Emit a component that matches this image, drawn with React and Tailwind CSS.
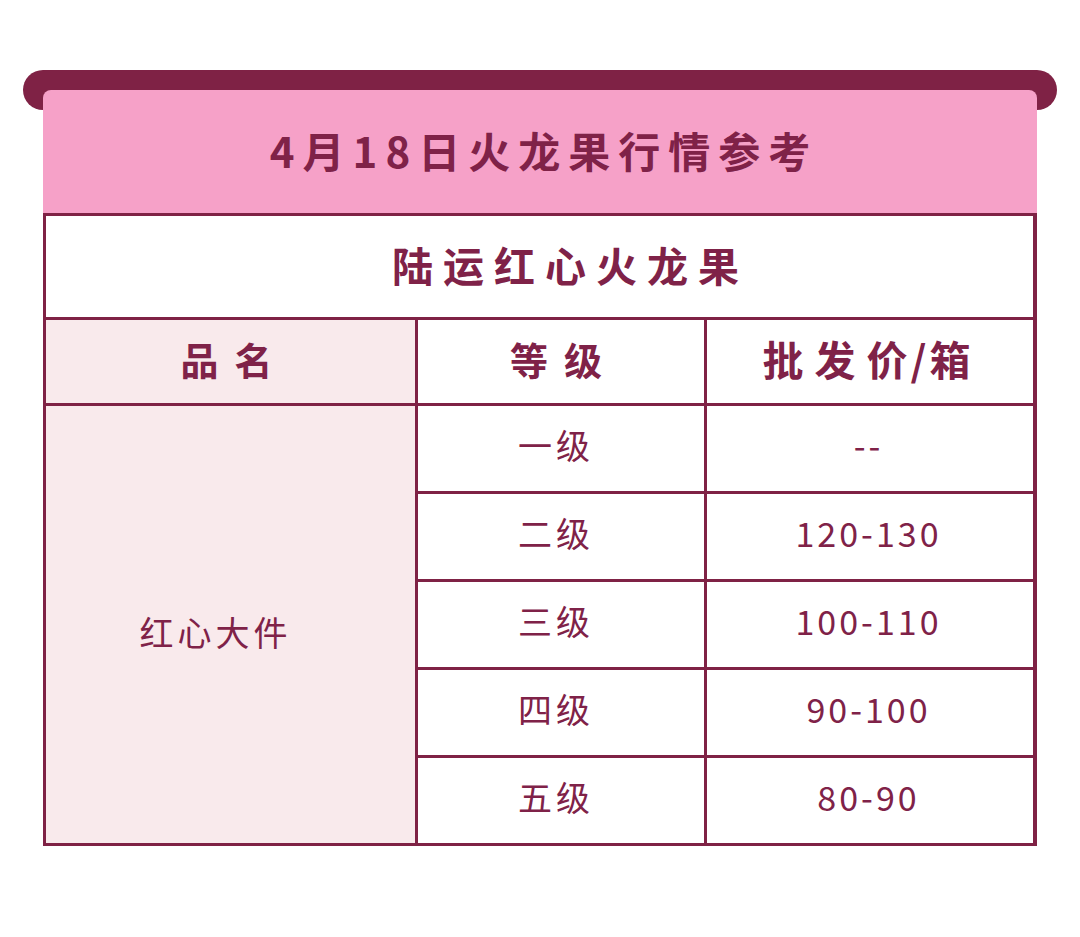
import React from "react";

const rows = [
  { grade: "一级", price: "--" },
  { grade: "二级", price: "120-130" },
  { grade: "三级", price: "100-110" },
  { grade: "四级", price: "90-100" },
  { grade: "五级", price: "80-90" },
];

export default function App() {
  return (
    <div
      className="min-h-[937px] w-[1080px] bg-white pt-[70px]"
      style={{ fontFamily: '"Noto Sans CJK SC", "Noto Sans", sans-serif' }}
    >
      {/* top rail */}
      <div className="mx-[23px] h-[40px] rounded-full bg-[#7f2245]" />

      <div className="relative mx-[43px] -mt-[20px]">
        {/* pink title */}
        <div className="flex h-[123px] items-center justify-center rounded-t-[8px] bg-[#f6a1c8] pb-[4px]">
          <h1 className="pl-[8px] text-[42px] font-bold tracking-[8px] text-[#7f2248]">
            4月18日火龙果行情参考
          </h1>
        </div>

        {/* table */}
        <div className="grid grid-cols-[369px_286px_326px] gap-[3px] bg-[#7f2245] p-[3px] text-[#7f2248]">
          <div className="col-span-3 flex h-[101px] items-center justify-center bg-white pb-[4px] pl-[52px]">
            <span className="pl-[10px] text-[41px] font-bold tracking-[10px]">
              陆运红心火龙果
            </span>
          </div>

          {/* header row */}
          <div className="flex h-[83px] items-center justify-center bg-[#f9eaec] pb-[6px] pr-[8px]">
            <span className="pl-[16px] text-[38px] font-bold tracking-[16px]">品名</span>
          </div>
          <div className="flex h-[83px] items-center justify-center bg-white pb-[6px] pr-[10px]">
            <span className="pl-[16px] text-[38px] font-bold tracking-[16px]">等级</span>
          </div>
          <div className="flex h-[83px] items-center justify-center bg-white pb-[6px] pr-[6px]">
            <span className="pl-[2px] text-[41px] font-bold">
              <span className="tracking-[11px]">批发</span>
              <span className="tracking-[3px]">价/箱</span>
            </span>
          </div>

          {/* merged name cell */}
          <div className="row-span-5 flex items-center justify-center bg-[#f9eaec] pr-[34px] pt-[14px]">
            <span className="pl-[4px] text-[34px] tracking-[4px]">红心大件</span>
          </div>

          {rows.map((r) => (
            <React.Fragment key={r.grade}>
              <div className="flex h-[85px] items-center justify-center bg-white pb-[8px] pr-[14px]">
                <span className="pl-[4px] text-[34px] tracking-[4px]">{r.grade}</span>
              </div>
              <div className="flex h-[85px] items-center justify-center bg-white pb-[8px] pr-[6px]">
                <span className="pl-[3px] text-[34px] tracking-[3px]">{r.price}</span>
              </div>
            </React.Fragment>
          ))}
        </div>
      </div>
    </div>
  );
}
